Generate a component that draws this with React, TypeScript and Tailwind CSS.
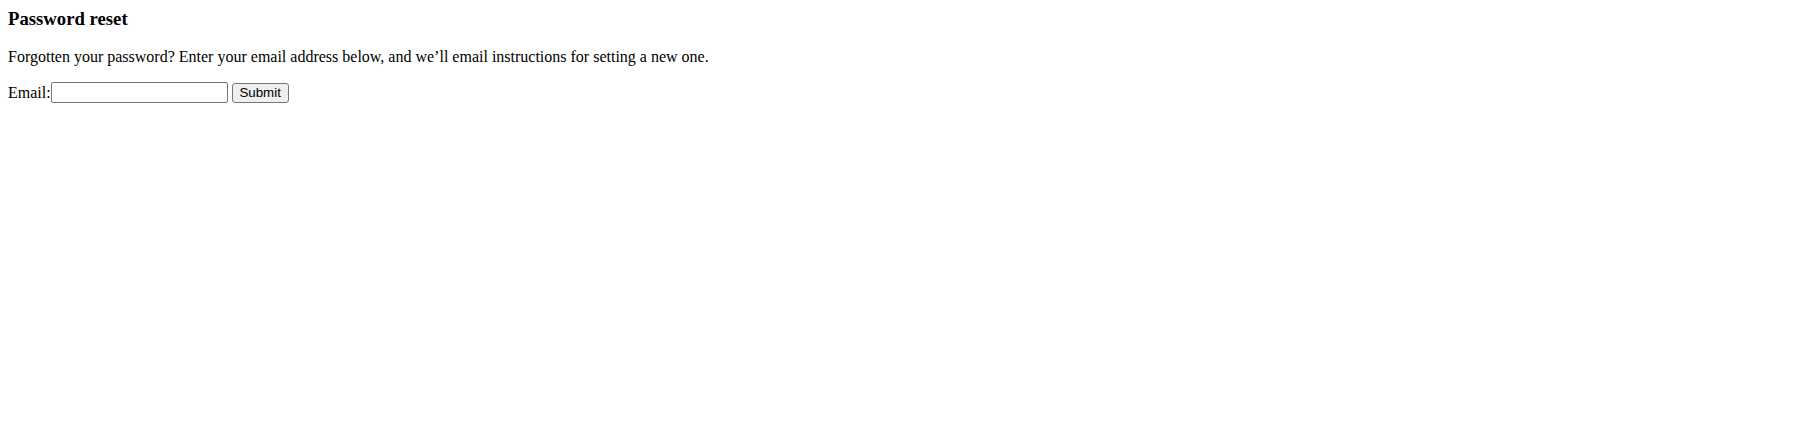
export default function App() {
  return (
    <div className="min-h-screen bg-white px-2 pt-[8px] font-['Liberation_Serif','Times_New_Roman',serif] text-black">
      <h3 className="text-[18.72px] leading-[22px] font-bold">Password reset</h3>

      <p className="mt-[18px] text-[16px] leading-[18px]">
        Forgotten your password? Enter your email address below, and we’ll email instructions for setting a new one.
      </p>

      <form className="mt-[16px] flex items-center text-[16px] leading-[18px]" onSubmit={(event) => event.preventDefault()}>
        <label htmlFor="id_email">Email:</label>
        <input
          id="id_email"
          type="email"
          name="email"
          className="h-[21px] w-[177px] rounded-[2px] border border-[#767676] bg-white px-[2px] font-['Liberation_Sans',Arial,sans-serif] text-[13.33px] outline-none"
        />
        <button
          type="submit"
          className="ml-[4px] h-[20px] w-[57px] rounded-[3px] border border-[#767676] bg-[#efefef] font-['Liberation_Sans',Arial,sans-serif] text-[13.33px] leading-[16px] text-black"
        >
          Submit
        </button>
      </form>
    </div>
  );
}
